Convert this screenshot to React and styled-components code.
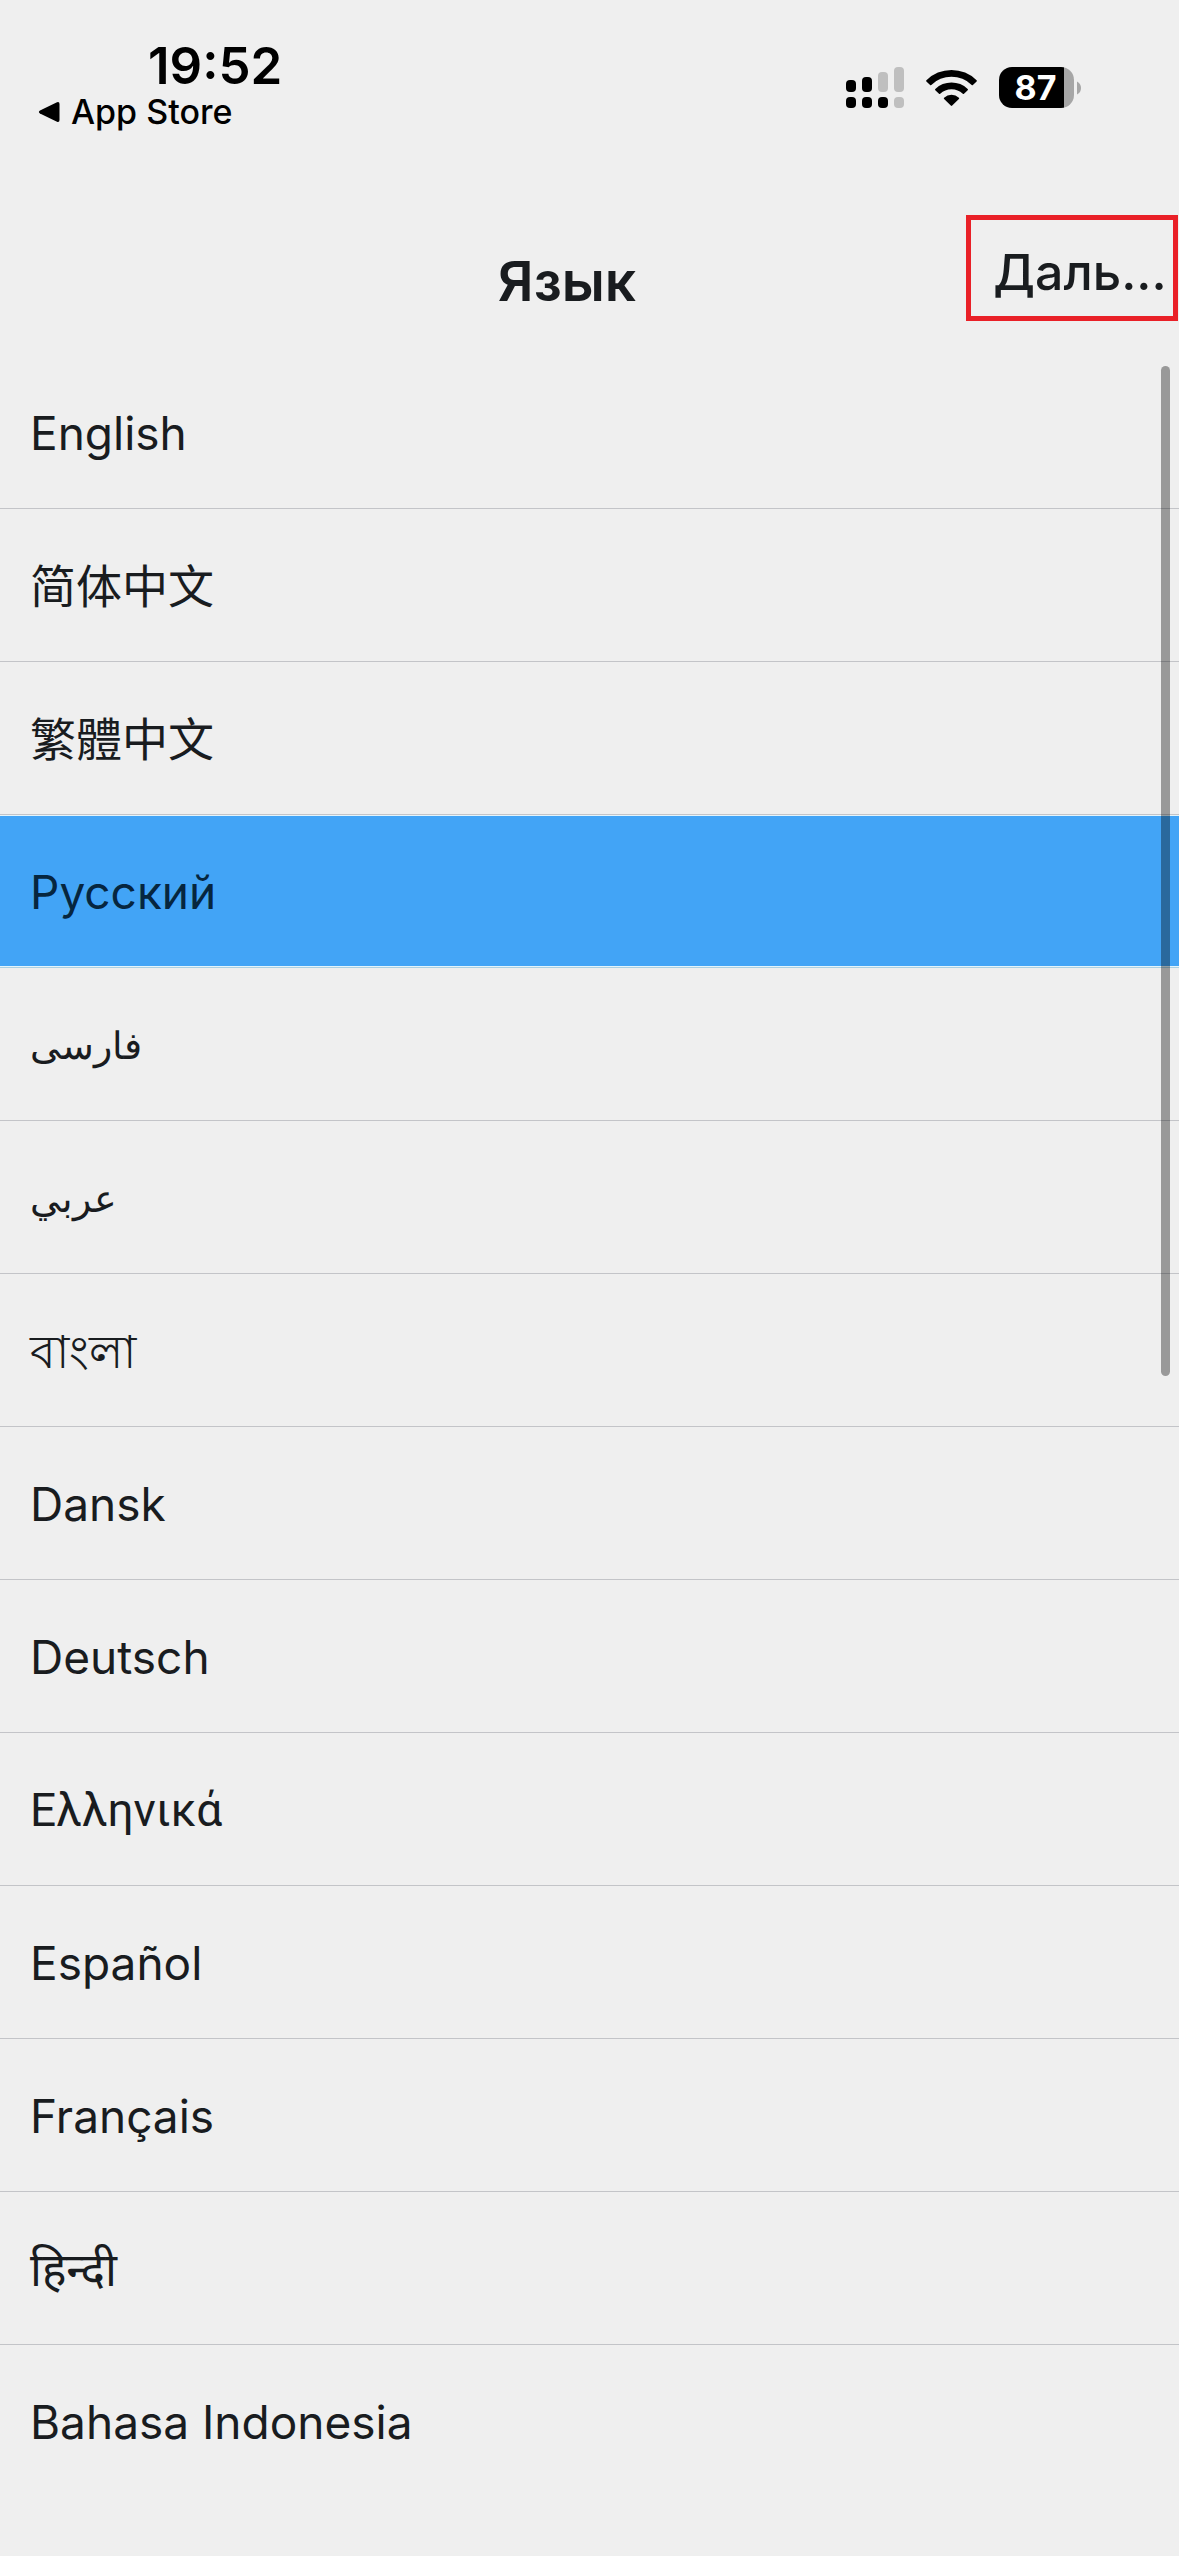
import React, { useState } from "react";
import styled, { createGlobalStyle } from "styled-components";

const GlobalStyle = createGlobalStyle`
  *, *::before, *::after { box-sizing: border-box; }
  body {
    margin: 0;
    background: #efefef;
    color: #191c1f;
    font-family: Inter, "Noto Sans", "Noto Sans CJK SC", sans-serif;
  }
`;

const Screen = styled.div`
  display: flex;
  flex-direction: column;
  min-height: 100vh;
  background: #efefef;
`;

const StatusBar = styled.header`
  display: flex;
  justify-content: space-between;
  padding: 40px 98px 0 38px;
  color: #000;
`;

const StatusLeft = styled.div`
  display: flex;
  flex-direction: column;
`;

const Clock = styled.time`
  padding-left: 110px;
  font-size: 51px;
  font-weight: 600;
  line-height: 52px;
`;

const BackLink = styled.a`
  display: flex;
  align-items: center;
  gap: 10px;
  color: inherit;
  font-size: 34px;
  font-weight: 500;
  line-height: 40px;
  text-decoration: none;
`;

const StatusRight = styled.div`
  display: flex;
  align-items: center;
  gap: 22px;
  height: 95px;
`;

const Battery = styled.div`
  display: flex;
  align-items: center;
  gap: 3px;
`;

const BatteryBody = styled.div`
  display: flex;
  align-items: center;
  justify-content: center;
  width: 75px;
  height: 41px;
  border-radius: 13px;
  padding-right: 2px;
  background: linear-gradient(to right, #000 65px, #a6a6a6 65px);
  color: #fff;
  font-size: 34px;
  font-weight: 700;
  line-height: 41px;
`;

const NavBar = styled.nav`
  display: flex;
  align-items: center;
  height: 141px;
  margin-top: 80px;
  padding: 0 1px 35px 0;
`;

const Title = styled.h1`
  flex: 1;
  margin: 0;
  padding: 26px 0 0 168px;
  font-size: 55px;
  font-weight: 600;
  line-height: 64px;
  text-align: center;
`;

const NextButton = styled.button`
  width: 212px;
  height: 106px;
  padding: 8px 0 0 16px;
  border: 5px solid #e92027;
  background: none;
  color: inherit;
  font: 500 50px/60px Inter, "Noto Sans", sans-serif;
  white-space: nowrap;
  cursor: pointer;
`;

const LanguageList = styled.main`
  position: relative;
  display: flex;
  flex-direction: column;
`;

const LanguageRow = styled.label`
  display: flex;
  align-items: center;
  height: 153px;
  padding: 2px 30px 0;
  border-bottom: 1px solid #c3c4c8;
  font-size: 46px;
  line-height: 60px;
  cursor: pointer;

  &:has(input:checked) {
    border-color: #abd0e2;
    background: #42a4f6;
    box-shadow: inset 0 1px #e4f4fb, inset 0 -1px #e4f4fb;
    color: #06263f;
  }

  &:last-of-type { border-bottom-color: transparent; }
`;

const SCRIPT_STYLES = {
  arabic: `font-size: 38px;`,
  greek: `font-family: Roboto, sans-serif;`,
};

const LanguageName = styled.bdi`
  ${({ $script }) => SCRIPT_STYLES[$script]}
`;

const Radio = styled.input`
  appearance: none;
  width: 0;
  height: 0;
  margin: 0;
`;

const ScrollThumb = styled.div`
  position: absolute;
  top: 10px;
  right: 9px;
  width: 9px;
  height: 1010px;
  border-radius: 5px;
  background: rgba(0, 0, 0, 0.36);
  pointer-events: none;
`;

const BackTriangle = () => (
  <svg width="23" height="22" viewBox="0 0 23 22" aria-hidden="true">
    <path d="M2 9.4 19 1.2Q21.5.4 21.5 3v16q0 2.600-2.500 1.800L2 12.600Q-.2 11 2 9.400Z" />
  </svg>
);

const BARS = [
  { x: 0, y: 13, top: "#000", dot: "#000" },
  { x: 16, y: 10, top: "#000", dot: "#000" },
  { x: 32, y: 5, top: "#bfbfbf", dot: "#000" },
  { x: 48, y: 0, top: "#bfbfbf", dot: "#bfbfbf" },
];

const SignalIcon = () => (
  <svg width="58" height="41" viewBox="0 0 58 41" role="img" aria-label="Signal">
    {BARS.map((b) => (
      <g key={b.x}>
        <rect x={b.x} y={b.y} width="10" height={25 - b.y} rx="4" fill={b.top} />
        <rect x={b.x} y="30" width="10" height="11" rx="4" fill={b.dot} />
      </g>
    ))}
  </svg>
);

const WifiIcon = () => (
  <svg width="51" height="37" viewBox="0 0 51 37" role="img" aria-label="Wi-Fi">
    <path d="M.4 11.300a35.500 35.500 0 0 1 50.200 0q.5.600 0 1.200l-3.700 3.400q-.6.500-1.200 0a28.800 28.800 0 0 0-40.400 0q-.6.500-1.200 0L.4 12.500q-.5-.6 0-1.200Z" />
    <path d="M9.300 20a23.200 23.200 0 0 1 32.400 0q.6.600 0 1.200L38 24.800q-.6.500-1.200 0a16.400 16.400 0 0 0-22.600 0q-.6.500-1.200 0l-3.700-3.600q-.6-.6 0-1.200Z" />
    <path d="M18.100 28.700a11 11 0 0 1 14.800 0q.6.600 0 1.200L26.200 36.600q-.7.600-1.400 0L18.100 29.900q-.6-.6 0-1.200Z" />
  </svg>
);

const BatteryCap = () => (
  <svg width="4" height="14" viewBox="0 0 4 14" aria-hidden="true">
    <path d="M0 .5Q4 2.500 4 7T0 13.500Z" fill="#a6a6a6" />
  </svg>
);

const LANGUAGES = [
  { code: "en", name: "English" },
  { code: "zh-Hans", name: "简体中文" },
  { code: "zh-Hant", name: "繁體中文" },
  { code: "ru", name: "Русский" },
  { code: "fa", name: "فارسی", script: "arabic" },
  { code: "ar", name: "عربي", script: "arabic" },
  { code: "bn", name: "বাংলা" },
  { code: "da", name: "Dansk" },
  { code: "de", name: "Deutsch" },
  { code: "el", name: "Ελληνικά", script: "greek" },
  { code: "es", name: "Español" },
  { code: "fr", name: "Français" },
  { code: "hi", name: "हिन्दी" },
  { code: "id", name: "Bahasa Indonesia" },
];

export default function App() {
  const [selected, setSelected] = useState("ru");

  return (
    <Screen>
      <GlobalStyle />
      <StatusBar>
        <StatusLeft>
          <Clock>19:52</Clock>
          <BackLink href="#">
            <BackTriangle />
            App Store
          </BackLink>
        </StatusLeft>
        <StatusRight>
          <SignalIcon />
          <WifiIcon />
          <Battery>
            <BatteryBody>87</BatteryBody>
            <BatteryCap />
          </Battery>
        </StatusRight>
      </StatusBar>
      <NavBar>
        <Title>Язык</Title>
        <NextButton type="button">Даль...</NextButton>
      </NavBar>
      <LanguageList>
        {LANGUAGES.map(({ code, name, script }) => (
          <LanguageRow key={code}>
            <Radio
              type="radio"
              name="language"
              value={code}
              checked={selected === code}
              onChange={() => setSelected(code)}
            />
            <LanguageName lang={code} $script={script}>
              {name}
            </LanguageName>
          </LanguageRow>
        ))}
        <ScrollThumb />
      </LanguageList>
    </Screen>
  );
}
